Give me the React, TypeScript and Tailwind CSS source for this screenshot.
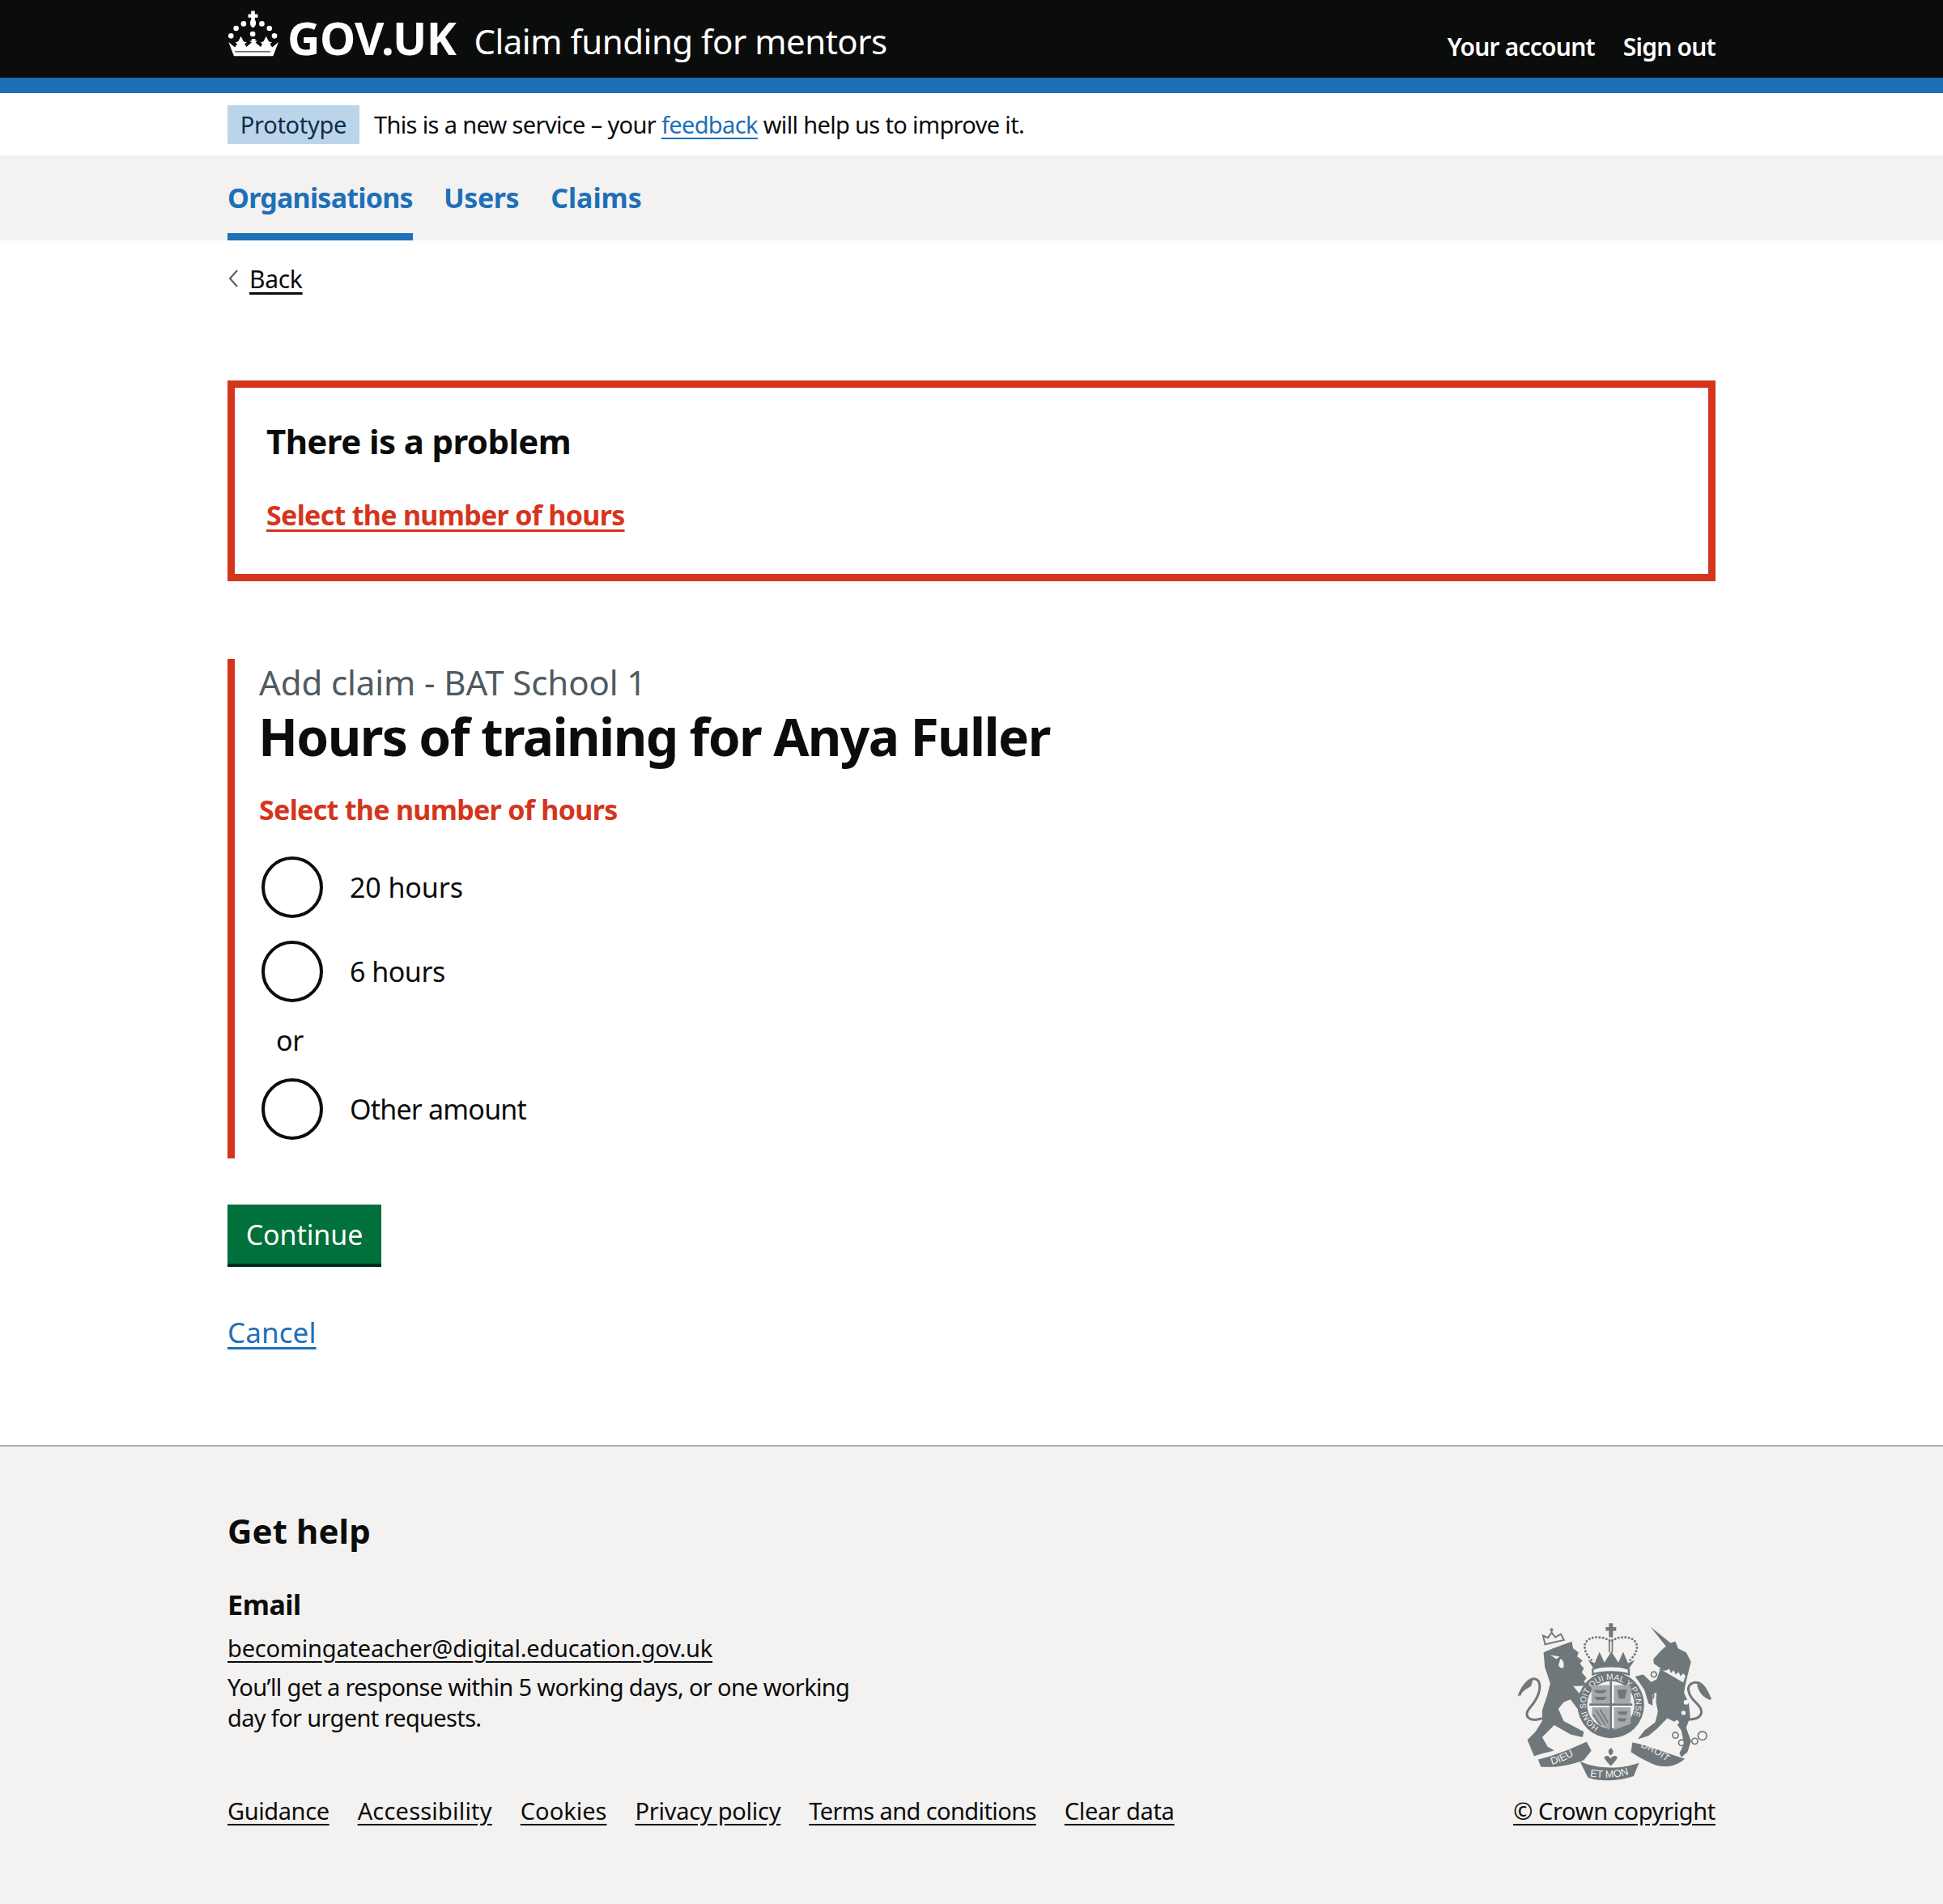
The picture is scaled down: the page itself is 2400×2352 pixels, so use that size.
import { ReactNode } from "react";

const Crown = () => (
    <svg viewBox="30 5 190 180" className="w-[63px] h-[60px] shrink-0 mb-[6px]" fill="#ffffff">
        <path d="M118 12h14v12h11v13h-11v8c6 6 6 24-7 30-13-6-13-24-7-30v-8h-11V24h11z" />
        <circle cx="62" cy="77" r="10" />
        <circle cx="90" cy="60" r="10" />
        <circle cx="158" cy="60" r="10" />
        <circle cx="186" cy="77" r="10" />
        <circle cx="43" cy="105" r="10" />
        <circle cx="205" cy="105" r="10" />
        <circle cx="124" cy="98" r="10" />
        <path d="M34 128l24 20 8-14-8-4 12-4 10-20 10 20 12 4-8 4 6 12 20-16-8-6h8v-8h14v8h8l-8 6 20 16 6-12-8-4 12-4 10-20 10 20 12 4-8 4 8 14 24-20-20 52H54z" />
        <path d="M58 164h132" stroke="#0b0c0c" strokeWidth="3" />
    </svg>
);

const CREST_BG = "#f3f2f1";
const CREST_FONT = "'Liberation Sans', sans-serif";

const Crest = () => (
    <svg viewBox="90 60 740 600" className="w-[246px] h-[200px]" fill="#6f777b">
        <defs>
            <path id="garter" d="M411 459A93 93 0 1 1 489 459" />
            <path id="dieu" d="M228 598C265 590 300 572 335 548" />
            <path id="etmon" d="M372 640C420 650 490 648 535 625" />
            <path id="droit" d="M560 532C600 545 640 570 672 600" />
        </defs>
        {/* lion */}
        <path d="M200 180l35-15 70-25 5 25 20 15-5 15 20 15-10 12 15 18-8 14 18 22-10 12 10 12-20 5h-30l50 60 10 35-25 15-45-60-25 10-20 25 20 45 75 40-5 20-45-10-60-35-45 45 20 35 25 15-40 10-35 10-25-60 30-30 25-40v-40l20-60 10-40-20-60z" />
        <path d="M195 425c-45 15-75-5-45-40 30-35 45-75 30-100-20-20-50 5-70 55" fill="none" stroke="#6f777b" strokeWidth="9" />
        <path d="M104 345c10-35 30-62 58-70l-8 30-24 15z" />
        <path d="M225 190l35 5-12 10zM262 205c12 0 16 20 12 32-10 4-16-2-18-10z" fill={CREST_BG} />
        <path d="M206 150l-8-32 18 8 14-20 14 18 20-12 12 22z" fill={CREST_BG} stroke="#6f777b" strokeWidth="6" />
        <path d="M230 104V90m-6 6h12" fill="none" stroke="#6f777b" strokeWidth="6" />
        {/* unicorn */}
        <path d="M597 85L672 145l18-5 10 25 30 15 18 35-10 40-10 40-6 35 18 40 5 50-15 40 18 50-13 40-23 20-7-15 17-35-10-50-22-30-30-15-40 40-30 25-40 13 25-33 40-30 10-40-7-35 2-35-15 5v43l-15-8-15-50-20-30-15-20 30-8 30 28 20-10 15-40-25-18-2-17 32-35 15-12z" />
        <path d="M735 430c55 0 65-30 35-60-35-30-45-70-10-78 30-4 45 28 60 63" fill="none" stroke="#6f777b" strokeWidth="9" />
        <path d="M820 357c-20-5-45-25-50-60l25 10z" />
        <path d="M635 245l85 50 10-28-12-12-8 10-8-16-10 10-8-16-10 10-6-16-12 8z" fill={CREST_BG} stroke="#6f777b" strokeWidth="4" />
        <circle cx="720" cy="405" r="8" fill={CREST_BG} />
        <circle cx="695" cy="440" r="8" fill={CREST_BG} />
        <circle cx="730" cy="365" r="9" fill={CREST_BG} />
        <g fill="none" stroke="#6f777b" strokeWidth="5">
            <circle cx="610" cy="262" r="10" />
            <circle cx="600" cy="342" r="10" />
            <circle cx="690" cy="488" r="11" />
            <circle cx="713" cy="516" r="11" />
            <circle cx="762" cy="510" r="11" />
            <circle cx="790" cy="490" r="16" />
        </g>
        {/* royal crown */}
        <path d="M443 72h15v14h12v14h-12v24h-15v-24h-12V86h12z" />
        <path d="M445 137c-30-22-95-18-92 25 2 20 15 38 28 50M455 137c30-22 95-18 92 25-2 20-15 38-28 50" fill="none" stroke="#6f777b" strokeWidth="9" strokeLinecap="round" strokeDasharray="0 13" />
        <path d="M442 130h5v50h-5zM453 130h5v50h-5z" />
        <path d="M365 208l25 12 18-42 18 40 22-35 4-8 4 8 22 35 18-40 18 42 25-12-20 30H385z" />
        <path d="M383 242c30-14 104-14 134 0v20c-30-12-104-12-134 0z" fill={CREST_BG} stroke="#6f777b" strokeWidth="7" />
        {/* garter and shield */}
        <circle cx="450" cy="375" r="124" />
        <circle cx="450" cy="375" r="88" fill={CREST_BG} />
        <text fontFamily={CREST_FONT} fontSize="31" fill={CREST_BG}>
            <textPath href="#garter" startOffset="1%">HONI SOIT QUI MAL Y PENSE</textPath>
        </text>
        <g fill="#a4a9ab">
            <path d="M378 302h68v68h-68zM462 302h62v68h-62zM462 384h62v62l-62 22zM380 384h66v84l-44-22-22-30z" />
        </g>
        <path d="M386 320h50l-12 12h-26zM386 345h50l-12 12h-26zM474 318h36l-8 34h-22zM474 400h40l-8 12h-24zM474 425h36l-8 12h-20z" />
        <path d="M395 395l35 55M410 392l30 50M385 410l28 42" fill="none" stroke="#6f777b" strokeWidth="5" />
        <path d="M446 288h8v190h-8zM370 370h160v8H370z" />
        <circle cx="415" cy="500" r="7" fill={CREST_BG} />
        <circle cx="462" cy="512" r="7" fill={CREST_BG} />
        {/* motto ribbon */}
        <path d="M180 578c60-13 130-43 180-66l18 33-28 35c-50 20-120 30-160 25z" />
        <path d="M335 585c65 30 155 30 220 5l-20 50c-55 20-135 20-170 5z" />
        <path d="M530 515c60 10 140 45 195 60-25 25-65 35-105 25-30-10-65-30-95-50z" />
        <path d="M450 535c-15 10-8 22 0 28 8-6 15-18 0-28zM425 570c10-10 20-5 25 5 5-10 15-15 25-5-5 10-10 18-25 32-15-14-20-22-25-32z" />
        <text fontFamily={CREST_FONT} fontSize="38" fill={CREST_BG}>
            <textPath href="#dieu" startOffset="2%">DIEU</textPath>
        </text>
        <text fontFamily={CREST_FONT} fontSize="38" fill={CREST_BG}>
            <textPath href="#etmon" startOffset="0%">ET MON</textPath>
        </text>
        <text fontFamily={CREST_FONT} fontSize="36" fill={CREST_BG}>
            <textPath href="#droit" startOffset="0%">DROIT</textPath>
        </text>
    </svg>
);

const Radio = ({ label, className }: { label: string; className: string }) => (
    <div className="h-[76px] flex items-center">
        <span className="ml-[3px] w-[76px] h-[76px] rounded-full border-[4px] border-[#0b0c0c] bg-white shrink-0" />
        <span className={`ml-[33px] text-[34px] ${className}`}>{label}</span>
    </div>
);

const Container = ({ children, className = "" }: { children: ReactNode; className?: string }) => (
    <div className={`w-[1838px] mx-auto ${className}`}>{children}</div>
);

const footerLinks = [
    { label: "Guidance", className: "tracking-[-0.4px]" },
    { label: "Accessibility", className: "tracking-[0.2px]" },
    { label: "Cookies", className: "tracking-[0px]" },
    { label: "Privacy policy", className: "tracking-[-0.25px]" },
    { label: "Terms and conditions", className: "tracking-[-0.6px]" },
    { label: "Clear data", className: "tracking-[-0.3px]" },
];

export default function App() {
    return (
        <div className="w-full min-h-[2352px] bg-white text-[#0b0c0c] font-['Noto_Sans',sans-serif] flex flex-col">
            {/* Header */}
            <header className="bg-[#0b0c0c] h-[96px] text-white">
                <Container className="h-full flex items-start justify-between">
                    <div className="flex items-center h-[88px]">
                        <Crown />
                        <span className="ml-[11px] text-[56px] font-bold tracking-[-0.6px] leading-none pt-[4px]">GOV.UK</span>
                        <span className="ml-[22px] text-[42px] leading-none pt-[13px] tracking-[-0.5px]">Claim funding for mentors</span>
                    </div>
                    <div className="flex gap-[35px] h-[114px] items-center text-[30px] font-semibold tracking-[-0.8px]">
                        <span>Your account</span>
                        <span>Sign out</span>
                    </div>
                </Container>
            </header>
            <div className="h-[19px] bg-[#1d70b8]" />

            {/* Phase banner */}
            <Container className="h-[77px] flex items-center">
                <span className="h-[48px] w-[163px] flex items-center justify-center bg-[#bbd4ea] text-[#0c2d4a] text-[29px] tracking-[-0.3px]">Prototype</span>
                <p className="ml-[18px] text-[29px] tracking-[-0.65px]">
                    This is a new service – your <a className="text-[#1d70b8] underline underline-offset-[5px]">feedback</a> will help us to improve it.
                </p>
            </Container>

            {/* Nav */}
            <nav className="bg-[#f3f2f1] h-[105px]">
                <Container className="h-full flex gap-[39px] text-[#1d70b8] text-[34px] font-bold">
                    <a className="h-full border-b-[9px] border-[#1d70b8] pt-[27px] tracking-[-0.75px]">Organisations</a>
                    <a className="pt-[27px] -ml-[1px] tracking-[-0.4px]">Users</a>
                    <a className="pt-[27px] tracking-[-0.05px]">Claims</a>
                </Container>
            </nav>

            <Container>
                {/* Back link */}
                <div className="h-[96px] flex items-center text-[30px] pb-[2px]">
                    <svg viewBox="0 0 14 24" className="w-[14px] h-[24px] mr-[13px]" fill="none" stroke="#505a5f" strokeWidth="2">
                        <path d="M12 2L3 12l9 10" />
                    </svg>
                    <a className="underline underline-offset-[5px] tracking-[-0.3px]">Back</a>
                </div>

                {/* Error summary */}
                <div className="mt-[77px] h-[248px] border-[9px] border-[#d4351c] pl-[39px] pt-[28px]">
                    <h2 className="text-[42px] font-bold tracking-[-0.6px] leading-[76px]">There is a problem</h2>
                    <a className="block mt-[23px] text-[34px] font-bold text-[#d4351c] underline underline-offset-[5px] tracking-[-0.7px] leading-[60px]">Select the number of hours</a>
                </div>

                {/* Form group */}
                <div className="mt-[96px] h-[617px] border-l-[9px] border-[#d4351c] pl-[30px]">
                    <div className="text-[42px] text-[#505a5f] leading-[58px] tracking-[-0.1px]">Add claim - BAT School 1</div>
                    <h1 className="text-[64px] font-bold leading-[76px] tracking-[-1.6px] -ml-[1px]">Hours of training for Anya Fuller</h1>
                    <div className="mt-[29px] text-[34px] font-bold text-[#d4351c] leading-[46px] tracking-[-0.7px]">Select the number of hours</div>
                    <div className="mt-[35px]">
                        <Radio label="20 hours" className="tracking-[-0.1px]" />
                        <div className="mt-[28px]">
                            <Radio label="6 hours" className="tracking-[-0.5px]" />
                        </div>
                        <div className="h-[94px] flex items-center pl-[21px] text-[34px] tracking-[-0.3px]">or</div>
                        <Radio label="Other amount" className="tracking-[-0.8px]" />
                    </div>
                </div>

                {/* Actions */}
                <button className="block mt-[57px] w-[190px] h-[77px] bg-[#00703c] border-b-[4px] border-[#002d18] text-white text-[34px] tracking-[-0.1px] pt-[1px]">Continue</button>
                <a className="block mt-[58px] w-fit text-[#1d70b8] text-[35px] leading-[46px] underline underline-offset-[5px] tracking-[0.1px]">Cancel</a>
            </Container>

            {/* Footer */}
            <footer className="mt-[116px] flex-1 bg-[#f3f2f1] border-t-[2px] border-[#b1b4b6] pt-[74px]">
                <Container>
                    <div className="h-[354px] flex justify-between items-end">
                        <div className="self-start">
                            <h2 className="text-[42px] font-bold tracking-[0.1px] leading-[60px]">Get help</h2>
                            <h3 className="mt-[38px] text-[34px] font-bold tracking-[-0.4px] leading-[46px]">Email</h3>
                            <a className="block mt-[9px] text-[29px] tracking-[-0.2px] leading-[44px] underline underline-offset-[5px]">becomingateacher@digital.education.gov.uk</a>
                            <p className="mt-[7px] text-[29px] tracking-[-0.65px] leading-[38px]">
                                You’ll get a response within 5 working days, or one working
                                <br />
                                day for urgent requests.
                            </p>
                        </div>
                        <div className="mb-[14px] mr-[3px]">
                            <Crest />
                        </div>
                    </div>
                    <div className="flex justify-between items-center h-[44px] text-[29px]">
                        <div className="flex gap-[35px]">
                            {footerLinks.map((link) => (
                                <a key={link.label} className={`underline underline-offset-[5px] ${link.className}`}>{link.label}</a>
                            ))}
                        </div>
                        <a className="underline underline-offset-[5px] tracking-[-0.35px]">© Crown copyright</a>
                    </div>
                </Container>
            </footer>
        </div>
    );
}
